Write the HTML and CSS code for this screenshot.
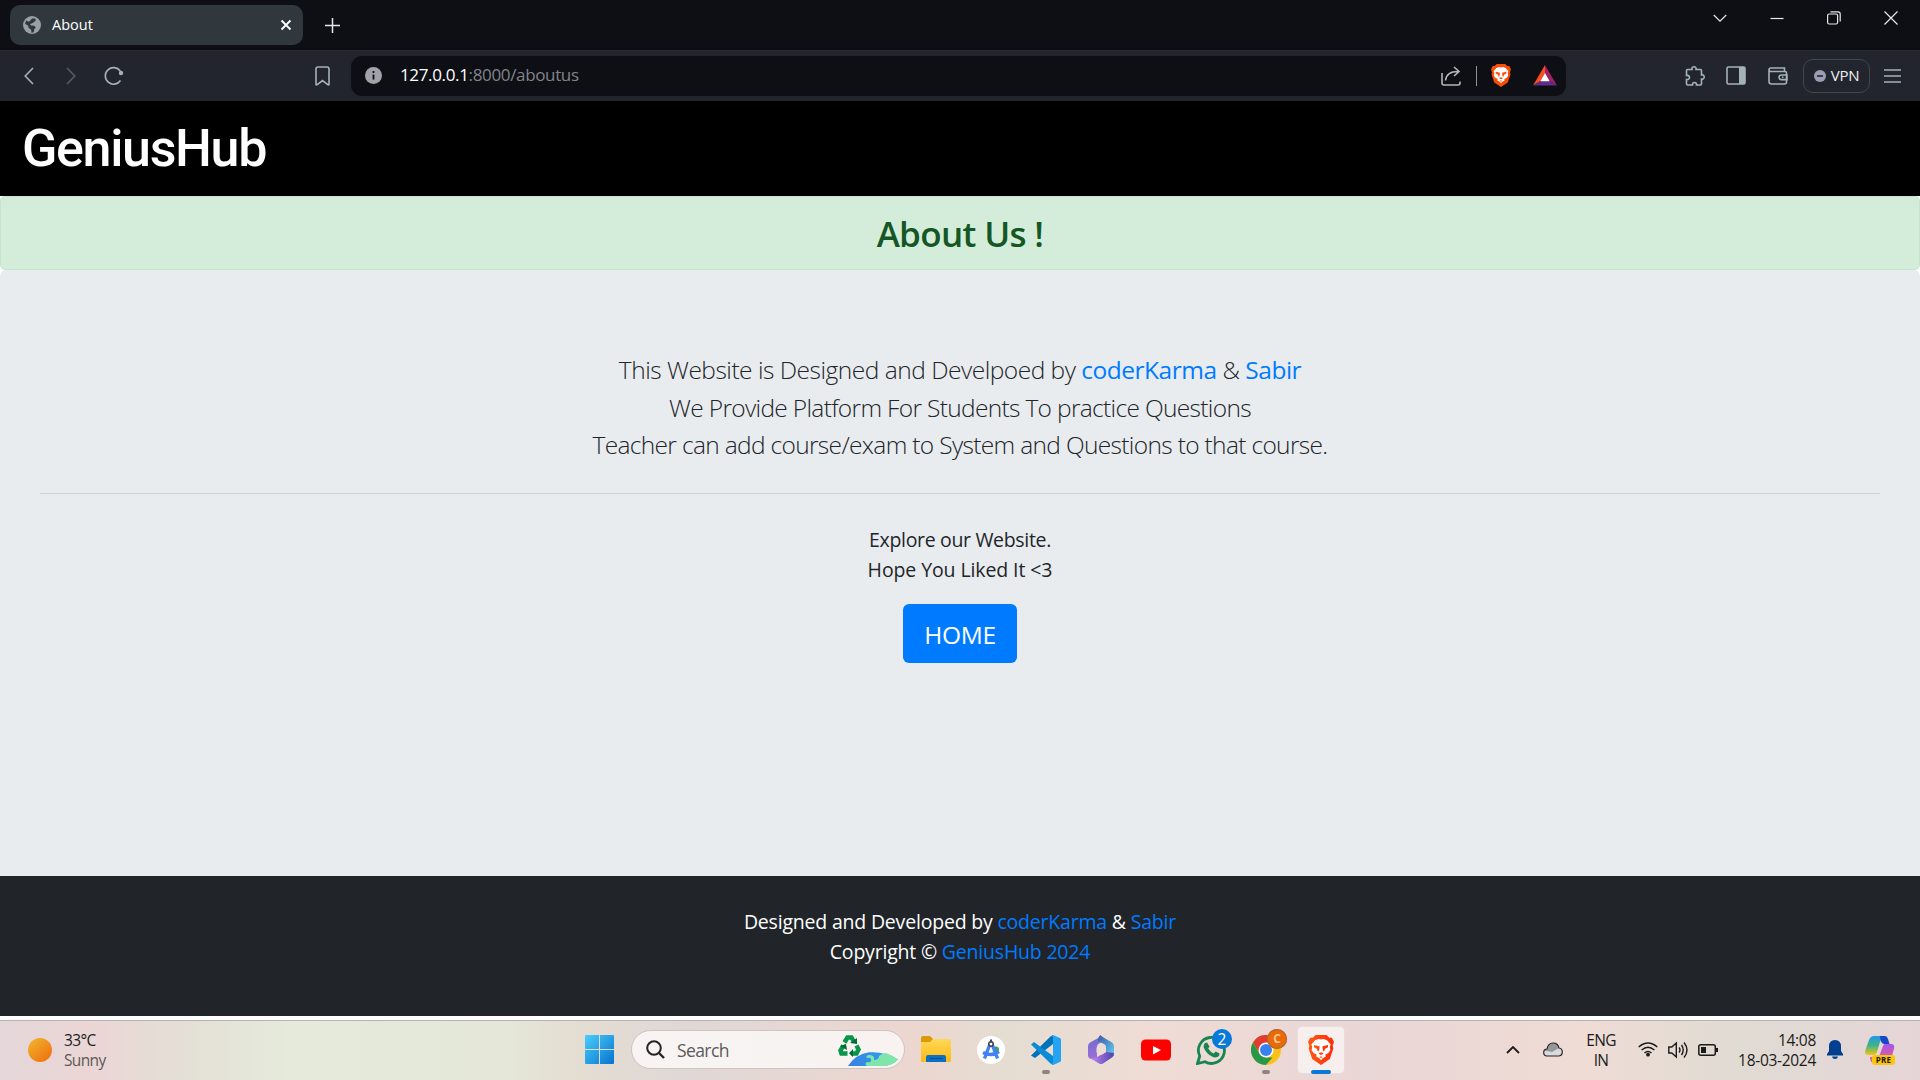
FILE: index.html
```html
<!DOCTYPE html>
<html lang="en">
<head>
<meta charset="utf-8">
<title>About</title>
<link rel="stylesheet" href="styles.css">
</head>
<body>
<svg class="defs" aria-hidden="true">
  <defs>
    <linearGradient id="braveFill" x1="0" x2="1"><stop offset="0" stop-color="#ff5a18"/><stop offset="1" stop-color="#ff2a08"/></linearGradient>
    <symbol id="lion" viewBox="0 0 26 30">
      <path d="M7.500 0h11l2.700 2.700h2.600L26 7l-1.300 3.600.6 3.200-3.500 10.300L13 30l-8.800-5.900L.7 13.800l.6-3.200L0 7l2.200-4.300h2.600z"/>
      <path fill="#fff" d="M7 5.300 10.500 4l2.500.6 2.500-.6L19 5.300l3.700 4.300-1 2.300.7 3-2 3-3 1.600.3 2.100-3 1.600-1.700 2-1.700-2-3-1.600.3-2.100-3-1.600-2-3 .7-3-1-2.300z"/>
      <path d="m6 10 4.300 1 1.300.3-.4 3.900-1.100 1.600-1.300-3L6 12.300zM20 10l-4.300 1-1.300.3.4 3.900 1.100 1.600 1.300-3 2.800-1.500zM10.500 18.300l2.500-1.100 2.500 1.100-1.500 1.400h-2zM11.300 22l1.700-.6 1.700.6-1.700 1.100z"/>
    </symbol>
  </defs>
</svg>

<header class="browser">
  <div class="tabstrip">
    <div class="tab">
      <svg class="globe" viewBox="0 0 18 18"><circle cx="9" cy="9" r="9" fill="#9aa0a6"/><path d="M3.200 4.600 6 5.800 9.200 2.400l3.200.2.300 2L10.500 6.400 7 8.200l1 1.400 3.400.2 1.400 2-1.600 1.400-.4 2.800-2.200 1-.6-3.400L5.600 12 5.200 9.800 2 7.800z" fill="#30383d"/></svg>
      <span class="tab-title">About</span>
      <svg class="tab-close" viewBox="0 0 12 12"><path d="m1.500 1.500 9 9m0-9-9 9" stroke="#fff" stroke-width="1.800"/></svg>
    </div>
    <svg class="new-tab" viewBox="0 0 15 15"><path d="M7.500 0v15M0 7.500h15" stroke="#e6e7e9" stroke-width="1.500"/></svg>
    <div class="window-buttons">
      <svg viewBox="0 0 14 14"><path d="m.8 4 6.200 6.200L13.200 4"/></svg>
      <svg viewBox="0 0 14 14"><path d="M.5 7.500h13"/></svg>
      <svg viewBox="0 0 14 14"><rect x=".6" y="3" width="10" height="10" rx="1.500"/><path d="M3.500.8h7.500q2.200 0 2.200 2.200v7.500"/></svg>
      <svg viewBox="0 0 14 14"><path d="m.5.5 13 13m0-13-13 13"/></svg>
    </div>
  </div>
  <div class="toolbar">
    <svg class="back" viewBox="0 0 10 18"><path d="M9 1 1.200 9 9 17"/></svg>
    <svg class="forward" viewBox="0 0 10 18"><path d="m1 1 7.800 8L1 17"/></svg>
    <svg class="reload" viewBox="0 0 20 20"><path d="M16.500 14.500A8.300 8.300 0 1 1 16.300 5"/><circle cx="17" cy="7" r="2.200" fill="#a3b2b9" stroke="none"/></svg>
    <svg class="bookmark" viewBox="0 0 15 20"><path d="M3 1h9q2 0 2 2v15.500q-.5.800-1.200.2L7.500 14.500 2.200 18.700Q1.500 19.300 1 18.500V3q0-2 2-2z"/></svg>
    <div class="address">
      <svg class="info" viewBox="0 0 17 17"><circle cx="8.500" cy="8.500" r="8.500" fill="#a0a4aa"/><path d="M8.500 7.500v5M8.500 4v2" stroke="#0e0f14" stroke-width="1.800"/></svg>
      <span class="url"><b>127.0.0.1</b>:8000/aboutus</span>
      <svg class="share" viewBox="0 0 20 20"><path d="M1 7v10q0 2 2 2h14q2 0 2-2v-1.500M4.500 14.500Q5.500 5.500 17 5.500M13 1l5 4.500-5 4.500"/></svg>
      <span class="divider"></span>
      <svg class="shield" viewBox="0 0 26 30"><use href="#lion"/></svg>
      <svg class="bat" viewBox="0 0 24 21"><path fill="#ff4b20" d="M12 0 0 20.500l7.500-4.500L12 8.500z"/><path fill="#9e1f63" d="m12 0 12 20.500-7.500-4.500L12 8.500z"/><path fill="#5f2c86" d="M0 20.500h24L16.500 16h-9z"/><path fill="#fff" d="m12 8 4.700 8.300H7.300z"/></svg>
    </div>
    <svg class="puzzle" viewBox="0 0 20 20"><path d="M2.500 3.500H7C6.500 1.800 7.600.8 9 .8s2.500 1 2 2.700h4.500q1 0 1 1V9c1.700-.5 2.700.5 2.700 2s-1 2.500-2.700 2v5q0 1-1 1h-4c.3-1.600-.7-2.500-2-2.500s-2.300.9-2 2.500H2.500q-1 0-1-1v-4.500c1.700.3 3-.5 3-2S3.200 9 1.500 9.500v-5q0-1 1-1z"/></svg>
    <svg class="panel" viewBox="0 0 20 19"><rect x="1" y="1" width="18" height="17" rx="1.500"/><path d="M13 1h6v17h-6z" fill="#a3b2b9" stroke="none"/></svg>
    <svg class="wallet" viewBox="0 0 20 18"><path d="M16.500 4V1H3Q1 1 1 3v11.500q0 2.500 2.500 2.500h13q2 0 2-2V6q0-1.500-1.500-1.500H3Q1 4.500 1 3M19 8h-5.500q-2.500 0-2.500 2.300t2.500 2.300H19zM14 10.300h1.500"/></svg>
    <div class="vpn"><svg viewBox="0 0 12 12"><circle cx="6" cy="6" r="6" fill="#9a9db4"/><path d="M3 6h6" stroke="#22252d" stroke-width="1.600"/></svg><span>VPN</span></div>
    <svg class="menu" viewBox="0 0 17 14"><path d="M0 1h17M0 7h17M0 13h17"/></svg>
  </div>
</header>

<main class="page">
  <nav class="navbar"><a class="logo">GeniusHub</a></nav>
  <h3 class="alert">About Us !</h3>
  <section class="jumbotron">
    <p class="lead"><span class="credit">This Website is Designed and Develpoed by <a>coderKarma</a> &amp; <a>Sabir</a></span><br>We Provide Platform For Students To practice Questions<br>Teacher can add course/exam to System and Questions to that course.</p>
    <hr class="rule">
    <p class="explore">Explore our Website.<br><span class="hope">Hope You Liked It &lt;3</span></p>
    <a class="btn">HOME</a>
  </section>
  <footer class="footer">
    <p>Designed and Developed by <a>coderKarma</a> &amp; <a>Sabir</a><br>Copyright © <a>GeniusHub 2024</a></p>
  </footer>
</main>

<div class="taskbar">
  <div class="weather">
    <span class="sun"></span>
    <p>33°C<br><span>Sunny</span></p>
  </div>
  <div class="apps">
    <svg class="start" viewBox="0 0 29 29"><defs><linearGradient id="win" x1="0" y1="0" x2="1" y2="1" gradientUnits="objectBoundingBox"><stop offset="0" stop-color="#4bcdfc"/><stop offset="1" stop-color="#0673d0"/></linearGradient></defs><path fill="url(#win)" d="M1 0h13v14H0V1q0-1 1-1zM15 0h13q1 0 1 1v13H15zM0 15h14v14H1q-1 0-1-1zM15 15h14v13q0 1-1 1H15z"/></svg>
    <div class="search">
      <svg class="lens" viewBox="0 0 19 19"><circle cx="8" cy="8" r="6.800" fill="none" stroke="#252525" stroke-width="2"/><path d="m13 13 5 5" stroke="#252525" stroke-width="2.400"/></svg>
      <span>Search</span>
      <svg class="eco" viewBox="0 0 60 32"><defs><linearGradient id="earth"><stop offset="0" stop-color="#3a7fe0"/><stop offset="1" stop-color="#26a9f5"/></linearGradient></defs>
        <path d="M10 31Q18 19 31 17.300 46 16 60 24.500 54 31 44 31z" fill="url(#earth)"/><path d="M29 31q-3-2 0-4 5 1 4-3-1-2-4-1-2-2 2-3 6 0 5 5 5 0 5-4 3-3 7-3 6 2 12 6.500Q54 31 46 31z" fill="#80e5aa"/>
        <g fill="none" stroke="#07964a" stroke-width="4.500"><path d="m6.500 7.500 3-5h4l2.300 4" /><path d="m18.500 10.500 2 4-2 4h-5"/><path d="M9.500 18.500h-6l-1-3 3-5"/></g><path fill="#046b32" d="m12 8 7 1 0-6zM15 14v8l-4-3.800zM2 11l6-2 1 6z"/></svg>
    </div>
    <div class="app"><svg viewBox="0 0 30 30" width="30" height="30"><defs><linearGradient id="fold" x2="0" y2="1"><stop offset="0" stop-color="#ffd857"/><stop offset="1" stop-color="#fdba13"/></linearGradient></defs><path fill="#dc9a06" d="M0 3q0-2 2-2h7l3 3v4H0z"/><path fill="url(#fold)" d="M0 7h9l3-3h16.500q1.500 0 1.500 1.500v20q0 1.500-1.500 1.500H0z"/><path fill="#0b70c4" d="M5 27v-5q0-2 2-2h16q2 0 2 2v5z"/><path d="M9 23.500h13" stroke="#064b8d"/></svg></div>
    <div class="app"><svg viewBox="0 0 30 30" width="30" height="30"><circle cx="15" cy="15" r="14" fill="#fff"/><circle cx="20" cy="14.500" r="3" fill="#35a853"/><path d="M14 9 8.500 23.500M16 9l5.500 14.500M7 17.500q8 4.500 16-1" fill="none" stroke="#4382f3" stroke-width="3.400"/><circle cx="15" cy="9" r="2.200" fill="#fff" stroke="#3b4650" stroke-width="1.600"/><path d="M15 4.500v3" stroke="#3b4650" stroke-width="2"/></svg></div>
    <div class="app running"><svg viewBox="0 0 30 30" width="30" height="30"><path fill="#0072b8" d="M0 20.500 19.500 1.500 22 0v9L4 23z"/><path fill="#0a8bd6" d="M0 9.500 3 7l19 14v9l-2.500-1.500z"/><path fill="#24a4f2" d="m22 0 7 3q1 .5 1 1.500v21q0 1-1 1.500l-7 3-2-1.500q2 .5 2-1.500V3q0-2-2-1.500z"/></svg></div>
    <div class="app"><svg viewBox="0 0 28 30" width="28" height="30"><defs><linearGradient id="o1" x2="0" y2="1"><stop offset="0" stop-color="#6c6dcc"/><stop offset="1" stop-color="#a06fd8"/></linearGradient><linearGradient id="o2" x2="1" y2="1"><stop offset="0" stop-color="#3b57a8"/><stop offset="1" stop-color="#62d1f1"/></linearGradient><linearGradient id="o3" x2="1"><stop offset="0" stop-color="#c18df0"/><stop offset="1" stop-color="#503fae"/></linearGradient></defs><path fill="url(#o1)" d="M15 1 3 7.500Q1 9 1 11v9q0 3 3 4l6 1V12q0-3 3-4l4-2z"/><path fill="url(#o2)" d="m14 1 11 6.500q2 1.500 2 4V21l-8-3v-6q0-2-2-3l-6-3q0-5 3-6z"/><path fill="url(#o3)" d="M27 18q0 3-2 4.500l-9 6q-2 1-4 0L3 23q4 1 7-1l9-5z"/><path fill="#ecdcd6" d="m14 10 4.500 2.500v5L14 20l-4.500-2.500v-5z"/></svg></div>
    <div class="app"><svg viewBox="0 0 30 22" width="30" height="22"><rect width="30" height="21" y=".5" rx="4.500" fill="#f00"/><path d="m12 7 8 4-8 4.500z" fill="#fff"/></svg></div>
    <div class="app"><svg viewBox="0 0 30 30" width="30" height="30"><path d="M1.500 28.500 3.700 21A13 13 0 1 1 9 26.700z" fill="none" stroke="#168552" stroke-width="2.800"/><path d="m9 8 2-.5 2.500 4-1.300 2q2 3.500 5.500 5l2-2 3.800 2-.5 2.500q-3 2.500-7 .5Q10 18.500 7.500 12q0-2.500 1.500-4z" fill="#168552"/></svg><span class="badge blue">2</span></div>
    <div class="app running"><svg viewBox="0 0 30 30" width="30" height="30"><circle cx="15" cy="15" r="15" fill="#fbc116"/><path fill="#e13c31" d="M2 7.500a15 15 0 0 1 26 0H15l-6.500 11z"/><path fill="#279847" d="M2 7.500 8.500 18.700 15 22.500h6.500L15 30A15 15 0 0 1 2 7.500z"/><circle cx="15" cy="15" r="7.500" fill="#fff"/><circle cx="15" cy="15" r="6" fill="#3a80ee"/></svg><span class="badge orange">C</span></div>
    <div class="app active"><svg viewBox="0 0 26 30" width="26" height="30" fill="url(#braveFill)"><use href="#lion"/></svg></div>
  </div>
  <div class="tray">
    <svg class="up" viewBox="0 0 14 8"><path d="m1 7 6-6 6 6" fill="none" stroke="#1b1b1b" stroke-width="1.800"/></svg>
    <svg class="cloud" viewBox="0 0 20 15"><path d="M4 14Q.7 14 .7 10.500T4 7Q5 1 10 1t6 5q3.300.5 3.300 4T16 14z" fill="#d9dadc"/><path d="M1 9q1-2 3-2 1-6 6-6t6 5l-7 4-5-1z" fill="#969799"/><path d="M4 14Q.7 14 .7 10.500T4 7Q5 1 10 1t6 5q3.300.5 3.300 4T16 14z" fill="none" stroke="#242424" stroke-width="1.200"/></svg>
    <p class="lang">ENG<br>IN</p>
    <svg class="wifi" viewBox="0 0 20 15"><path d="M.7 5q9.300-8 18.600 0M3.600 8q6.400-5.500 12.800 0M6.500 11q3.500-3 7 0" fill="none" stroke="#1b1b1b" stroke-width="1.500"/><circle cx="10" cy="12.700" r="1.900" fill="#1b1b1b"/></svg>
    <svg class="sound" viewBox="0 0 20 18"><path d="M.8 6h3l4.500-4v14l-4.500-4h-3zM11 6.500q2 2.500 0 5M13.500 4q3.500 5 0 10M16 1.500q6 7.500 0 15" fill="none" stroke="#1b1b1b" stroke-width="1.400"/></svg>
    <svg class="battery" viewBox="0 0 20 12"><rect x=".8" y=".8" width="16.500" height="10.400" rx="2" fill="none" stroke="#1b1b1b" stroke-width="1.500"/><path d="M3 3h5v6H3zM18 4h2v4h-2z" fill="#1b1b1b"/></svg>
    <p class="clock">14:08<br>18-03-2024</p>
    <svg class="bell" viewBox="0 0 16 19"><path d="M8 0q6 0 6 6.500V11l2 3v1.500H0V14l2-3V6.500Q2 0 8 0zM5 16.500h6q-.5 2.500-3 2.500t-3-2.500z" fill="#023f91"/></svg>
    <div class="copilot">
      <svg viewBox="0 0 30 28"><defs><linearGradient id="c1" x2="0" y2="1"><stop offset="0" stop-color="#2397e8"/><stop offset=".5" stop-color="#3eb489"/><stop offset="1" stop-color="#f3c50d"/></linearGradient><linearGradient id="c2" x2="0" y2="1"><stop offset="0" stop-color="#a453ee"/><stop offset="1" stop-color="#f6647b"/></linearGradient></defs><path fill="url(#c1)" d="M9 0h10q-3 2-4 6l-3 10q-1 3-4 3H3q-4 0-2.500-5L4 4q1.500-4 5-4z"/><path fill="#1648c8" d="M15 0h5q2 0 3 3l1.500 5h-5q-3 0-4-4z"/><path fill="url(#c2)" d="M20 8h6q4 0 3 5l-3 10q-1 4-5 4H9q-4 0-4-6h6q3 0 4-3l3-8q.5-2 2-2z"/></svg>
      <span class="pre">PRE</span>
    </div>
  </div>
</div>
</body>
</html>
```
FILE: styles.css
```css
* { box-sizing: border-box; }
body {
  margin: 0;
  width: 1920px;
  height: 1080px;
  overflow: hidden;
  display: flex;
  flex-direction: column;
  background: #fff;
  font-family: "Open Sans", "Noto Sans", sans-serif;
}
p, h3 { margin: 0; }
svg { display: block; flex: none; }
.defs { position: absolute; width: 0; height: 0; }

/* Browser chrome */
.browser { flex: none; }
.tabstrip { height: 50px; padding: 5px 22px 0 10px; display: flex; align-items: flex-start; background: #0e0f14; }
.tab { width: 293px; height: 40px; padding: 0 11px 0 13px; display: flex; align-items: center; border-radius: 10px; background: #30383d; color: #fff; }
.globe { width: 18px; height: 18px; }
.tab-title { flex: 1; margin-left: 11px; padding-bottom: 2px; font-size: 14.500px; }
.tab-close { width: 12px; height: 12px; }
.new-tab { width: 15px; height: 15px; margin: 13px 0 0 22px; }
.window-buttons { margin: 6px 0 0 auto; display: flex; align-items: center; gap: 43px; }
.window-buttons svg { width: 14px; height: 14px; fill: none; stroke: #e8e8e8; stroke-width: 1.200; }
.toolbar { height: 51px; padding: 0 19px 1px 24px; display: flex; align-items: center; border-top: 1px solid #292b31; background: #22252d; }
.toolbar > svg { fill: none; stroke: #a3b2b9; stroke-width: 1.600; }
.back { width: 10px; height: 18px; }
.forward { width: 10px; height: 18px; margin-left: 32px; opacity: .4; }
.reload { width: 20px; height: 20px; margin-left: 28px; }
.bookmark { width: 15px; height: 20px; margin-left: 191px; }
.address { width: 1215px; height: 40px; margin: 0 0 0 21px; padding: 0 9px 0 14px; display: flex; align-items: center; border-radius: 11px; background: #0e0f14; }
.info { width: 17px; height: 17px; }
.url { flex: 1; margin-left: 18px; padding-bottom: 2px; color: #81848a; font-size: 17px; line-height: 24px; letter-spacing: -.35px; }
.url b { color: #fff; font-weight: 400; }
.share { width: 20px; height: 20px; fill: none; stroke: #b3b8bd; stroke-width: 1.600; }
.divider { width: 1px; height: 20px; margin: 0 14px 0 15px; background: #8e9195; }
.shield { width: 20px; height: 23px; fill: #fb4c05; }
.bat { width: 24px; height: 21px; margin-left: 22px; }
.puzzle { width: 20px; height: 20px; margin-left: 119px; }
.panel { width: 20px; height: 19px; margin-left: 21px; }
.wallet { width: 20px; height: 18px; margin-left: 22px; }
.vpn { width: 67px; height: 34px; margin-left: 15px; display: flex; align-items: center; justify-content: center; gap: 5px; border: 1px solid #3c474e; border-radius: 10px; color: #f0f0f2; font-size: 15px; letter-spacing: -.3px; }
.vpn svg { width: 12px; height: 12px; }
.vpn span { padding-bottom: 1px; }
.menu { width: 17px; height: 14px; margin-left: 14px; }

/* Page */
.page { flex: none; height: 915px; }
.page a { color: #007bff; }
.navbar { height: 95px; padding: 16px 22px; background: #000; }
.page .logo { display: block; color: #fff; font: 500 52px/64px Roboto, sans-serif; letter-spacing: -1.350px; }
.alert { height: 74px; padding: 16px 25px 14px; border: 1px solid #c3e6cb; border-radius: 5px; background: #d4edda; color: #155724; font-size: 35px; font-weight: 600; line-height: 42px; letter-spacing: -.65px; text-align: center; }
.jumbotron { height: 606px; padding: 81px 40px 79px; border-radius: 6px 6px 0 0; background: #e9ecef; color: #212529; text-align: center; }
.lead { font-size: 24.500px; font-weight: 300; line-height: 37.500px; letter-spacing: -.67px; }
.credit { letter-spacing: -.49px; }
.lead a { font-weight: 400; }
.rule { height: 1px; margin: 29px 0 31px; border: 0; background: #ced1d5; }
.explore { margin-bottom: 19px; font-size: 19.500px; line-height: 30px; letter-spacing: -.33px; }
.hope { letter-spacing: -.1px; }
.page .btn { display: inline-block; padding: 12px 21px 10px; border-radius: 6px; background: #007bff; color: #fff; font-size: 24.500px; line-height: 37.500px; letter-spacing: -.3px; vertical-align: top; }
.footer { height: 140px; padding-top: 31px; background: #212529; color: #fff; font-size: 19.500px; line-height: 30px; letter-spacing: -.2px; text-align: center; }

/* Taskbar */
.taskbar {
  flex: none;
  height: 60px;
  margin-top: 4px;
  padding: 0 25px 2px 28px;
  display: flex;
  align-items: center;
  border-top: 1px solid #b9b3af;
  background: linear-gradient(90deg, #e5d7d9 0, #ebd6d5 90px, #e4ded6 170px, #e5eadb 290px, #e5e8d8 500px, #e4ddd2 580px, #dfd8d6 680px, #ecd6d0 900px, #e5ddd2 1010px, #efdcd5 1150px, #e9d6d6 1370px, #efdcd5 1580px, #e0dbd3 1740px, #e6d5d7 1920px);
  color: #1b1b1b;
  font-size: 15.500px;
  line-height: 20px;
}
.weather { width: 557px; display: flex; align-items: center; gap: 12px; letter-spacing: -.65px; }
.weather p span { color: #5c5857; }
.sun { width: 24px; height: 24px; border-radius: 50%; background: linear-gradient(140deg, #efb92f, #f16a0d); }
.apps { display: flex; align-items: center; gap: 7px; }
.start { width: 29px; height: 29px; }
.search { width: 274px; height: 39px; margin-left: 10px; padding: 0 6px 0 14px; display: flex; align-items: center; border: 1px solid #cdc4c1; border-radius: 20px; background: linear-gradient(90deg, #f7f4f3, #f8f3f1); color: #5c5a59; font-size: 17.500px; letter-spacing: -.6px; }
.search .lens { width: 19px; height: 19px; margin-right: 12px; }
.eco { width: 60px; height: 32px; margin: 3px 0 0 auto; }
.app { position: relative; width: 48px; height: 48px; display: grid; place-items: center; border-radius: 5px; }
.active { border: 1px solid #e9dedd; background: #f6efee; }
.running::after, .active::after { content: ""; position: absolute; bottom: 0; left: 50%; width: 8px; height: 4px; border-radius: 2px; background: #8b8481; transform: translateX(-50%); }
.active::after { bottom: -1px; width: 20px; background: #0779d8; }
.badge { position: absolute; top: 3px; right: 3px; width: 20px; height: 20px; border-radius: 50%; text-align: center; line-height: 20px; }
.blue { background: #0779d8; color: #fff; }
.orange { background: #ea6a05; color: #ffc492; font-size: 12px; font-weight: 700; box-shadow: 0 0 0 1px #a56a3c inset; }
.tray { margin-left: auto; display: flex; align-items: center; letter-spacing: -.65px; }
.up { width: 14px; height: 8px; }
.cloud { width: 20px; height: 15px; margin-left: 23px; }
.lang { width: 40px; margin-left: 18px; text-align: center; }
.wifi { width: 20px; height: 15px; margin-left: 17px; }
.sound { width: 20px; height: 18px; margin-left: 10px; }
.battery { width: 20px; height: 12px; margin-left: 10px; }
.clock { width: 82px; margin-left: 16px; text-align: right; white-space: nowrap; letter-spacing: -.3px; }
.bell { width: 16px; height: 19px; margin-left: 11px; }
.copilot { position: relative; margin-left: 22px; }
.copilot svg { width: 30px; height: 28px; }
.pre { position: absolute; right: 0; bottom: -1px; width: 23px; height: 10px; border-radius: 3px; background: #fdc50d; color: #1b1b1b; font-size: 8px; font-weight: 700; line-height: 10px; letter-spacing: .3px; text-align: center; }
```
